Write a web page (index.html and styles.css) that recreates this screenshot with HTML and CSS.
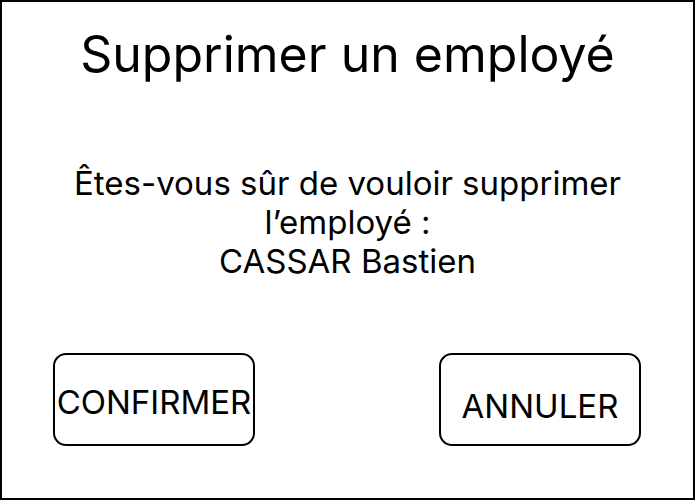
FILE: index.html
```html
<!DOCTYPE html>
<html lang="fr">
<head>
    <meta charset="UTF-8">
    <meta name="viewport" content="width=device-width, initial-scale=1.0">
    <title>Supprimer un employé</title>
    <link rel="stylesheet" href="styles.css">
</head>
<body>
    <div class="dialog">
        <h1 class="title">Supprimer un employé</h1>
        <p class="question">
            Êtes-vous sûr de vouloir supprimer<br>
            l’employé :<br>
            CASSAR Bastien
        </p>
        <div class="actions">
            <button class="btn btn-confirm">CONFIRMER</button>
            <button class="btn btn-cancel">ANNULER</button>
        </div>
    </div>
</body>
</html>
```

FILE: styles.css
```css
body, html {
    margin: 0;
    height: 100%;
    background: #fff;
    font-family: 'Inter', sans-serif;
    color: #000;
}

.dialog {
    width: 695px;
    height: 500px;
    box-sizing: border-box;
    border: 2px solid #000;
    display: flex;
    flex-direction: column;
    align-items: center;
}

.title {
    font-size: 50px;
    font-weight: 400;
    margin: 22px 0 0;
    line-height: 60px;
}

.question {
    font-size: 33px;
    line-height: 39px;
    text-align: center;
    margin: 80px 0 0;
}

.actions {
    align-self: stretch;
    display: flex;
    justify-content: space-between;
    padding: 0 52px 0 51px;
    margin-top: 72px;
}

.btn {
    width: 202px;
    height: 93px;
    box-sizing: border-box;
    border: 2px solid #000;
    border-radius: 13px;
    background: #fff;
    font-family: 'Inter', sans-serif;
    font-size: 33px;
    color: #000;
    padding: 0;
    white-space: nowrap;
}

.btn-confirm {
    padding-top: 4px;
}

.btn-cancel {
    padding-top: 12px;
}
```
